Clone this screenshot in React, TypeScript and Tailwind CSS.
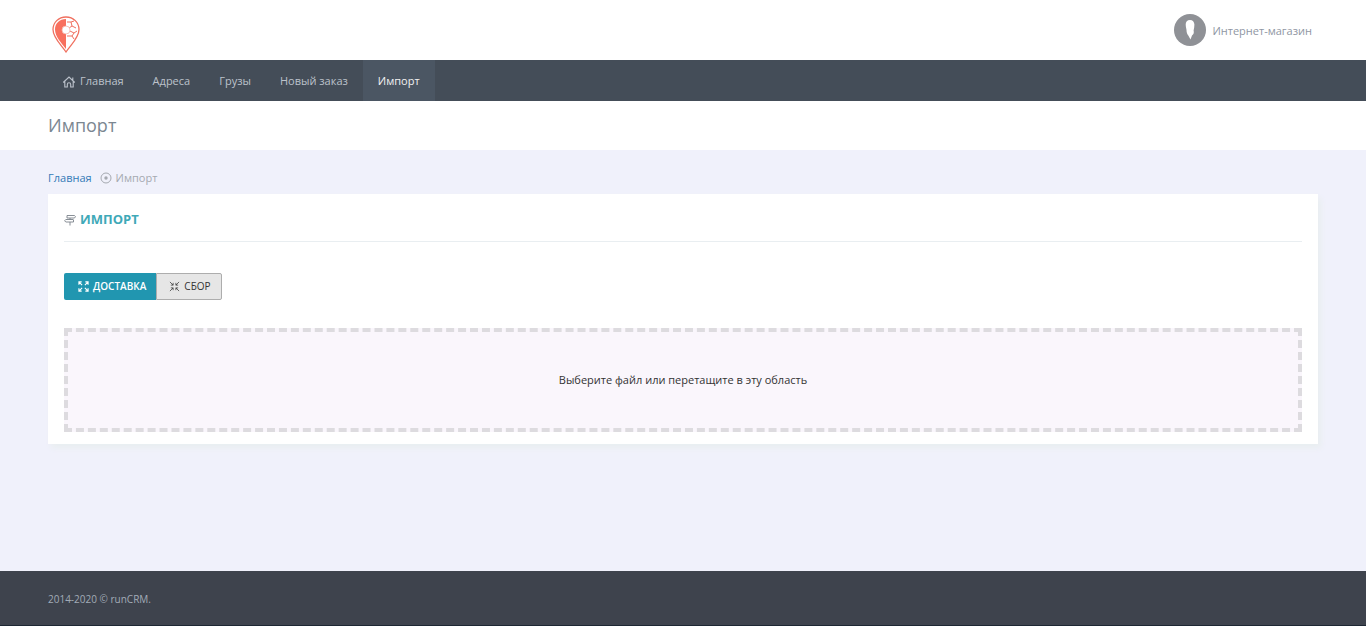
import React from "react";

const menu = ["Адреса", "Грузы", "Новый заказ"];

const Logo = () => (
  <svg width="28" height="37" viewBox="0 0 28 37" fill="none" aria-hidden="true">
    <path
      d="M14 1C6.500 1 1 6.500 1 13.500C1 22 9.500 29 14 36C18.500 29 27 22 27 13.500C27 6.500 21.500 1 14 1Z"
      fill="#fff"
      stroke="#f0705f"
      strokeWidth="1.300"
    />
    <path d="M14 3C7.500 3 3 7.500 3 13.500C3 20.500 9.500 27 14 33Z" fill="#f8705e" />
    <g stroke="#f0705f" strokeWidth="1">
      <path d="M15 6H19L22 5M19 6L20 10L24 12M20 10L17 12M18 15L22 17L25 15M22 17L20 20L22 23M15 20L20 20" />
    </g>
    <circle cx="14" cy="14" r="4" fill="#fff" stroke="#f4b4aa" strokeWidth="0.800" />
  </svg>
);

const Avatar = () => (
  <svg width="32" height="32" viewBox="0 0 32 32" aria-hidden="true">
    <circle cx="16" cy="16" r="16" fill="#8f9196" />
    <path
      d="M16 6C13.200 6 11.600 8 11.700 10.500C11.800 13 12.300 14.500 12.500 16C12.500 18.500 13.300 20.500 14.300 21.500L16.500 25.500L18 21.500C19.600 20.500 20.200 18.500 19.600 16.500C20 14.500 20.500 12.500 20.400 10.500C20.200 8 18.800 6 16 6Z"
      fill="#fff"
    />
  </svg>
);

const HomeIcon = () => (
  <svg width="14" height="12" viewBox="0 0 14 12" fill="none" stroke="currentColor" strokeWidth="1.100" aria-hidden="true">
    <path d="M1.200 6.500L7 1L12.800 6.500M2.800 5.500V11H5.300V8.500C5.300 6.200 8.700 6.200 8.700 8.500V11H11.200V5.500M10.800 4V1.500" />
  </svg>
);

const DotIcon = () => (
  <svg width="12" height="12" viewBox="0 0 12 12" fill="none" aria-hidden="true">
    <circle cx="6" cy="6" r="5" stroke="#a5a9b0" />
    <circle cx="6" cy="6" r="1.700" fill="#a5a9b0" />
  </svg>
);

const SignIcon = () => (
  <svg width="12" height="12" viewBox="0 0 12 12" fill="none" stroke="#7b828a" strokeWidth="0.900" aria-hidden="true">
    <path d="M3 1.500H10.500L11.500 2.700L10.500 4H3ZM9 5.500H1.800L0.600 6.800L1.800 8H9.500V5.500M6 4V5.500M6 8V11.500" />
  </svg>
);

const ExpandIcon = () => (
  <svg width="11" height="11" viewBox="0 0 12 12" fill="none" stroke="currentColor" strokeWidth="1.200" aria-hidden="true">
    <path d="M1 4V1H4M1 1L4.500 4.500M8 1H11V4M11 1L7.500 4.500M1 8V11H4M1 11L4.500 7.500M8 11H11V8M11 11L7.500 7.500" />
  </svg>
);

const CompressIcon = () => (
  <svg width="11" height="11" viewBox="0 0 12 12" fill="none" stroke="currentColor" strokeWidth="0.800" aria-hidden="true">
    <path d="M4.500 2V4.500H2M4.500 4.500L1 1M7.500 2V4.500H10M7.500 4.500L11 1M4.500 10V7.500H2M4.500 7.500L1 11M7.500 10V7.500H10M7.500 7.500L11 11" />
  </svg>
);

const App = () => {
  return (
    <div className="flex min-h-screen flex-col bg-[#f0f1fb] font-['Open_Sans',sans-serif] text-[11px] text-[#333]">
      <header>
        <div className="flex h-15 items-center justify-between bg-white px-12">
          <a href="#" aria-label="runCRM" className="mt-2 ml-1">
            <Logo />
          </a>
          <a href="#" className="mr-1.5 flex items-center gap-1.5 text-[#8f96a3]">
            <Avatar />
            <span className="pt-0.5">Интернет-магазин</span>
          </a>
        </div>
        <nav className="flex h-[41px] gap-px bg-[#444d58] px-12 text-[#bcc2cb]">
          <a href="#" className="flex items-center gap-1 px-3.5 pt-0.5">
            <HomeIcon />
            Главная
          </a>
          {menu.map((item) => (
            <a key={item} href="#" className="flex items-center px-3.5 pt-0.5">
              {item}
            </a>
          ))}
          <a href="#" className="flex items-center bg-[#4b5663] px-[15px] pt-0.5 text-[#f1f1f1]">
            Импорт
          </a>
        </nav>
        <div className="flex h-[49px] items-center bg-white px-12 pb-0.5">
          <h1 className="text-lg text-[#7b8791]">Импорт</h1>
        </div>
      </header>

      <main className="flex-1 px-12 pt-4.5">
        <div className="flex h-5 items-center">
          <a href="#" className="text-[#337ab7]">
            Главная
          </a>
          <span className="flex items-center gap-1 pl-2 text-[#a5a9b0]">
            <DotIcon />
            Импорт
          </span>
        </div>

        <section className="mt-1.5 bg-white px-4 pt-2 pb-3 shadow-[3px_4px_6px_#e9eef0]">
          <h2 className="flex h-10 items-center gap-1 border-b border-[#e9eef1] pb-1 text-[13px] font-bold text-[#3fa9b8]">
            <SignIcon />
            ИМПОРТ
          </h2>

          <div className="mt-[31px] flex text-[10px]">
            <button className="flex h-[27px] items-center gap-1 rounded-l-xs bg-[#2196b0] pr-2.5 pl-3.5 font-semibold text-white">
              <ExpandIcon />
              ДОСТАВКА
            </button>
            <button className="flex h-[27px] items-center gap-1 rounded-r-xs border border-[#adadad] bg-[#e6e6e6] pr-2.5 pl-3 font-medium text-[#333]">
              <CompressIcon />
              СБОР
            </button>
          </div>

          <label className="mt-7 flex h-[104px] cursor-pointer items-center justify-center border-4 border-dashed border-[#dddbdf] bg-[#faf6fc]">
            Выберите файл или перетащите в эту область
            <input type="file" className="sr-only" />
          </label>
        </section>
      </main>

      <footer className="flex h-[55px] items-center border-b border-[#1d2733] bg-[#3e434d] px-12 pt-0.5 text-[10px] text-[#a2abb7]">
        2014-2020 © runCRM.
      </footer>
    </div>
  );
};

export default App;
